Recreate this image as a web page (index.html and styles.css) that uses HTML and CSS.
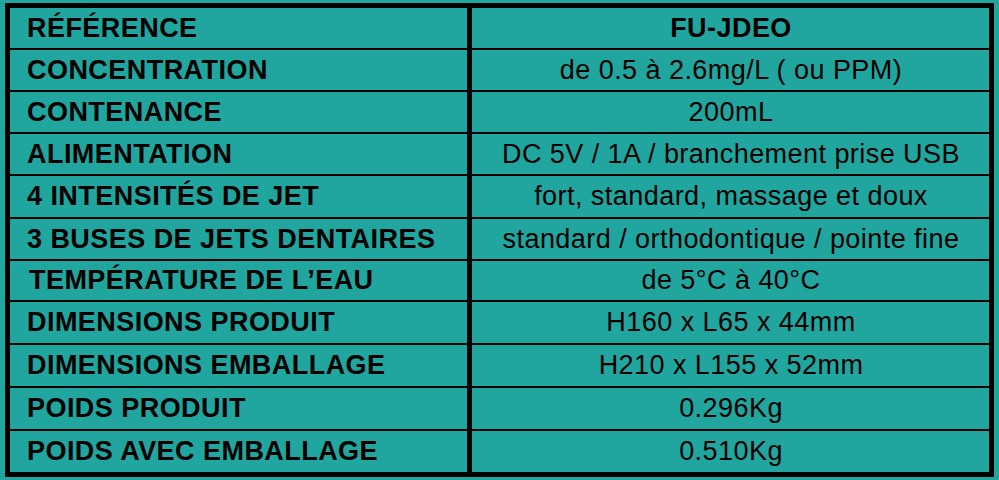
FILE: index.html
```html
<!DOCTYPE html>
<html lang="fr">
<head>
<meta charset="utf-8">
<title>FU-JDEO</title>
<link rel="stylesheet" href="styles.css">
</head>
<body>
<div class="spec">
  <div class="k">RÉFÉRENCE</div><div class="v"><b>FU-JDEO</b></div>
  <div class="k">CONCENTRATION</div><div class="v">de 0.5 à 2.6mg/L ( ou PPM)</div>
  <div class="k">CONTENANCE</div><div class="v">200mL</div>
  <div class="k">ALIMENTATION</div><div class="v">DC 5V / 1A / branchement prise USB</div>
  <div class="k">4 INTENSITÉS DE JET</div><div class="v">fort, standard, massage et doux</div>
  <div class="k">3 BUSES DE JETS DENTAIRES</div><div class="v">standard / orthodontique / pointe fine</div>
  <div class="k k-ind">TEMPÉRATURE DE L’EAU</div><div class="v">de 5°C à 40°C</div>
  <div class="k">DIMENSIONS PRODUIT</div><div class="v">H160 x L65 x 44mm</div>
  <div class="k">DIMENSIONS EMBALLAGE</div><div class="v">H210 x L155 x 52mm</div>
  <div class="k">POIDS PRODUIT</div><div class="v">0.296Kg</div>
  <div class="k">POIDS AVEC EMBALLAGE</div><div class="v">0.510Kg</div>
</div>
</body>
</html>
```

FILE: styles.css
```css
html, body {
  margin: 0;
  padding: 0;
  background: #21a69f;
}
body {
  width: 999px;
  height: 480px;
  overflow: hidden;
  font-family: "Liberation Sans", Arial, sans-serif;
  font-size: 27px;
  letter-spacing: 0.45px;
  color: #000;
}
.spec {
  margin: 3px 5px;
  width: 979px;
  height: 464px;
  border: 5px solid #000;
  background: #000;
  display: grid;
  grid-template-columns: 457px 517px;
  grid-template-rows: 40px 40px 40px 40px 41px 40px 39px 41px 41px 41px 41px;
  column-gap: 5px;
  row-gap: 2px;
}
.k, .v {
  background: #21a69f;
  display: flex;
  align-items: center;
  line-height: 1;
  white-space: nowrap;
}
.k {
  font-weight: bold;
  padding-left: 17px;
}
.k-ind {
  padding-left: 19px;
}
.v {
  justify-content: center;
  padding-left: 1px;
}
.v b {
  font-weight: bold;
}
```
